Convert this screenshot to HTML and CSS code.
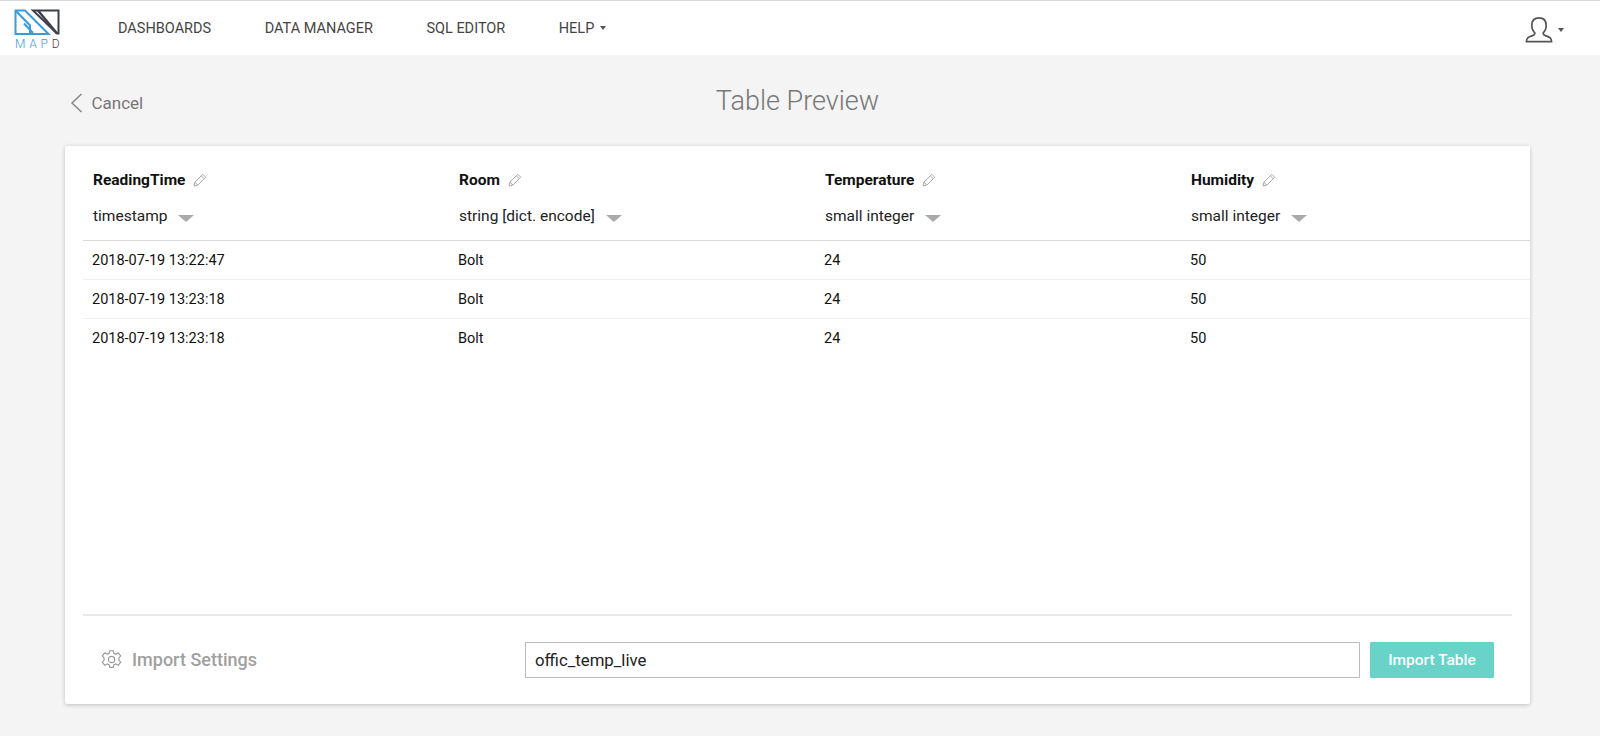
FILE: index.html
```html
<!DOCTYPE html>
<html lang="en">
<head>
<meta charset="utf-8">
<title>Table Preview</title>
<link rel="stylesheet" href="styles.css">
</head>
<body>
<header class="topbar">
  <div class="logo">
    <svg class="logo-mark" width="46" height="26" viewBox="0 0 46 26" fill="none">
      <path d="M1.500 25V1.500H11L34.500 25Z" stroke="#3a9bdc" stroke-width="2"/>
      <path d="M2 2L16 16.500V25M10 14.500L19 24" stroke="#3a9bdc" stroke-width="2"/>
      <path d="M19 1.500H44.500V24.500H43Z" stroke="#3d3f4a" stroke-width="2"/>
      <path d="M24 1.500L43 24.500" stroke="#3d3f4a" stroke-width="2.500"/>
    </svg>
    <div class="logo-text">MAP<span class="logo-d">D</span></div>
  </div>
  <nav class="nav">
    <a class="nav-link">DASHBOARDS</a>
    <a class="nav-link">DATA MANAGER</a>
    <a class="nav-link">SQL EDITOR</a>
    <a class="nav-link">HELP<span class="caret caret-nav"></span></a>
  </nav>
  <div class="user">
    <svg width="28" height="28" viewBox="0 0 30 28" fill="none" stroke="#555" stroke-width="1.800">
      <path d="M1.500 26.500c0-4 2-5 6-6.200 2.500-.8 3.200-1.600 3-3.300-2-1.600-3.200-4.400-3.200-8C7.300 4 10 1 15 1s7.700 3 7.700 8c0 3.600-1.200 6.400-3.200 8-.2 1.700.5 2.500 3 3.300 4 1.200 6 2.200 6 6.200Z"/>
    </svg>
    <span class="caret caret-user"></span>
  </div>
</header>

<main class="page">
  <div class="page-head">
    <a class="cancel">
      <svg width="13" height="20" viewBox="0 0 13 20" fill="none" stroke="#888" stroke-width="1.500"><path d="M11.500 1L2 10l9.500 9"/></svg>
      <span>Cancel</span>
    </a>
    <h1 class="title">Table Preview</h1>
  </div>

  <section class="card">
    <div class="columns">
      <div class="col-head">
        <div class="col-name">ReadingTime <svg class="pencil" width="14" height="14" viewBox="0 0 14 14"><use href="#pencil"/></svg></div>
        <div class="col-type">timestamp<span class="type-arrow"></span></div>
      </div>
      <div class="col-head">
        <div class="col-name">Room <svg class="pencil" width="14" height="14" viewBox="0 0 14 14"><use href="#pencil"/></svg></div>
        <div class="col-type">string [dict. encode]<span class="type-arrow"></span></div>
      </div>
      <div class="col-head">
        <div class="col-name">Temperature <svg class="pencil" width="14" height="14" viewBox="0 0 14 14"><use href="#pencil"/></svg></div>
        <div class="col-type">small integer<span class="type-arrow"></span></div>
      </div>
      <div class="col-head">
        <div class="col-name">Humidity <svg class="pencil" width="14" height="14" viewBox="0 0 14 14"><use href="#pencil"/></svg></div>
        <div class="col-type">small integer<span class="type-arrow"></span></div>
      </div>
    </div>
    <div class="rows">
      <div class="row"><span>2018-07-19 13:22:47</span><span>Bolt</span><span>24</span><span>50</span></div>
      <div class="row"><span>2018-07-19 13:23:18</span><span>Bolt</span><span>24</span><span>50</span></div>
      <div class="row"><span>2018-07-19 13:23:18</span><span>Bolt</span><span>24</span><span>50</span></div>
    </div>
    <div class="footer">
      <a class="settings">
        <svg width="21" height="21" viewBox="0 0 24 24" fill="none" stroke="#999" stroke-width="1.300" stroke-linejoin="round">
          <circle cx="12" cy="12" r="3.600"/>
          <path d="M10 2h4l.7 3 2.300 1 2.700-1.600 2.800 3.500-2 2.300v2.600l2 2.300-2.800 3.500-2.700-1.600-2.300 1-.7 3h-4l-.7-3-2.300-1-2.700 1.600-2.800-3.500 2-2.300v-2.600l-2-2.300 2.800-3.500L7 6l2.300-1Z"/>
        </svg>
        <span>Import Settings</span>
      </a>
      <input class="table-name" type="text" value="offic_temp_live">
      <button class="import-btn" type="button">Import Table</button>
    </div>
  </section>
</main>

<svg class="defs" width="0" height="0">
  <symbol id="pencil" viewBox="0 0 14 14">
    <path d="M1 13l.9-3.800L9.800 1.300l2.900 2.900-7.900 7.900ZM1.900 9.200l2.900 2.900M8.300 2.800l2.900 2.900" fill="none" stroke="#a8a8a8" stroke-width="1"/>
  </symbol>
</svg>
</body>
</html>
```
FILE: styles.css
```css
* { box-sizing: border-box; }
html, body { margin: 0; height: 100%; }
body {
  background: #f4f4f4;
  font-family: Roboto, "Liberation Sans", sans-serif;
  color: #111;
  overflow: hidden;
}
.topbar {
  height: 55px;
  background: #fff;
  border-top: 1px solid #d8d8d8;
  display: flex;
  align-items: center;
}
.logo { width: 118px; padding: 8px 0 0 14px; align-self: flex-start; }
.logo-mark { display: block; }
.logo-text {
  font-size: 12px;
  line-height: 12px;
  margin-top: 3px;
  margin-left: 1px;
  font-weight: 300;
  letter-spacing: 3.800px;
  white-space: nowrap;
  color: #3a9bdc;
}
.logo-d { color: #3d3f4a; }
.nav { display: flex; gap: 53.500px; }
.nav-link { font-size: 14.500px; color: #444; display: flex; align-items: center; }
.caret { width: 0; height: 0; border-left: 3.500px solid transparent; border-right: 3.500px solid transparent; border-top: 4px solid #555; }
.caret-nav { margin-left: 6px; }
.user { margin-left: auto; margin-right: 36px; display: flex; align-items: center; padding-top: 3px; }
.caret-user { margin-left: 5px; }
.page { padding: 0 70px 0 65px; }
.page-head { position: relative; height: 91px; display: flex; justify-content: center; }
.cancel {
  position: absolute;
  left: 5px;
  top: 38px;
  display: flex;
  align-items: center;
  gap: 8.500px;
  font-size: 17px;
  color: #777;
}
.title { margin: 29px 0 0; font-size: 27px; line-height: 34px; font-weight: 300; color: #777; }
.card {
  height: 558px;
  background: #fff;
  border-radius: 2px;
  box-shadow: 0 1px 4px rgba(0,0,0,.22);
  display: flex;
  flex-direction: column;
}
.columns, .row {
  display: grid;
  grid-template-columns: repeat(4, 366px);
}
.columns { margin-left: 18px; padding-top: 24px; height: 95px; border-bottom: 1px solid #d9d9d9; }
.col-head { padding-left: 10px; }
.col-name { font-size: 15.500px; font-weight: 700; line-height: 20px; color: #111; display: flex; align-items: center; gap: 2px; white-space: pre; }
.pencil { margin-left: 2px; }
.col-type { margin-top: 16px; font-size: 15.500px; line-height: 20px; color: #222; display: flex; align-items: center; }
.type-arrow { margin: 5px 0 0 11px; width: 0; height: 0; border-left: 8px solid transparent; border-right: 8px solid transparent; border-top: 7px solid #aaa; }
.rows { flex: 1; margin-left: 18px; }
.row { height: 39px; align-items: center; padding: 0 0 0 9px; font-size: 14.500px; color: #111; border-bottom: 1px solid #f0f0f0; }
.row:last-child { border-bottom: 0; }
.footer {
  margin: 0 18px;
  height: 90px;
  border-top: 2px solid #e8e8e8;
  display: flex;
  align-items: center;
}
.settings { margin: 0 0 2px 18px; width: 424px; display: flex; align-items: center; gap: 10px; font-size: 18px; font-weight: 500; color: #a0a0a0; }
.table-name {
  width: 835px;
  height: 36px;
  border: 1px solid #bdbdbd;
  padding: 0 9px;
  font: 400 16.800px Roboto, "Liberation Sans", sans-serif;
  color: #222;
  outline: none;
}
.import-btn {
  margin-left: 10px;
  width: 124px;
  height: 36px;
  border: 0;
  border-radius: 1px;
  background: #69d3ca;
  color: #fff;
  font: 500 15.500px Roboto, "Liberation Sans", sans-serif;
}
.defs { position: absolute; }
```
